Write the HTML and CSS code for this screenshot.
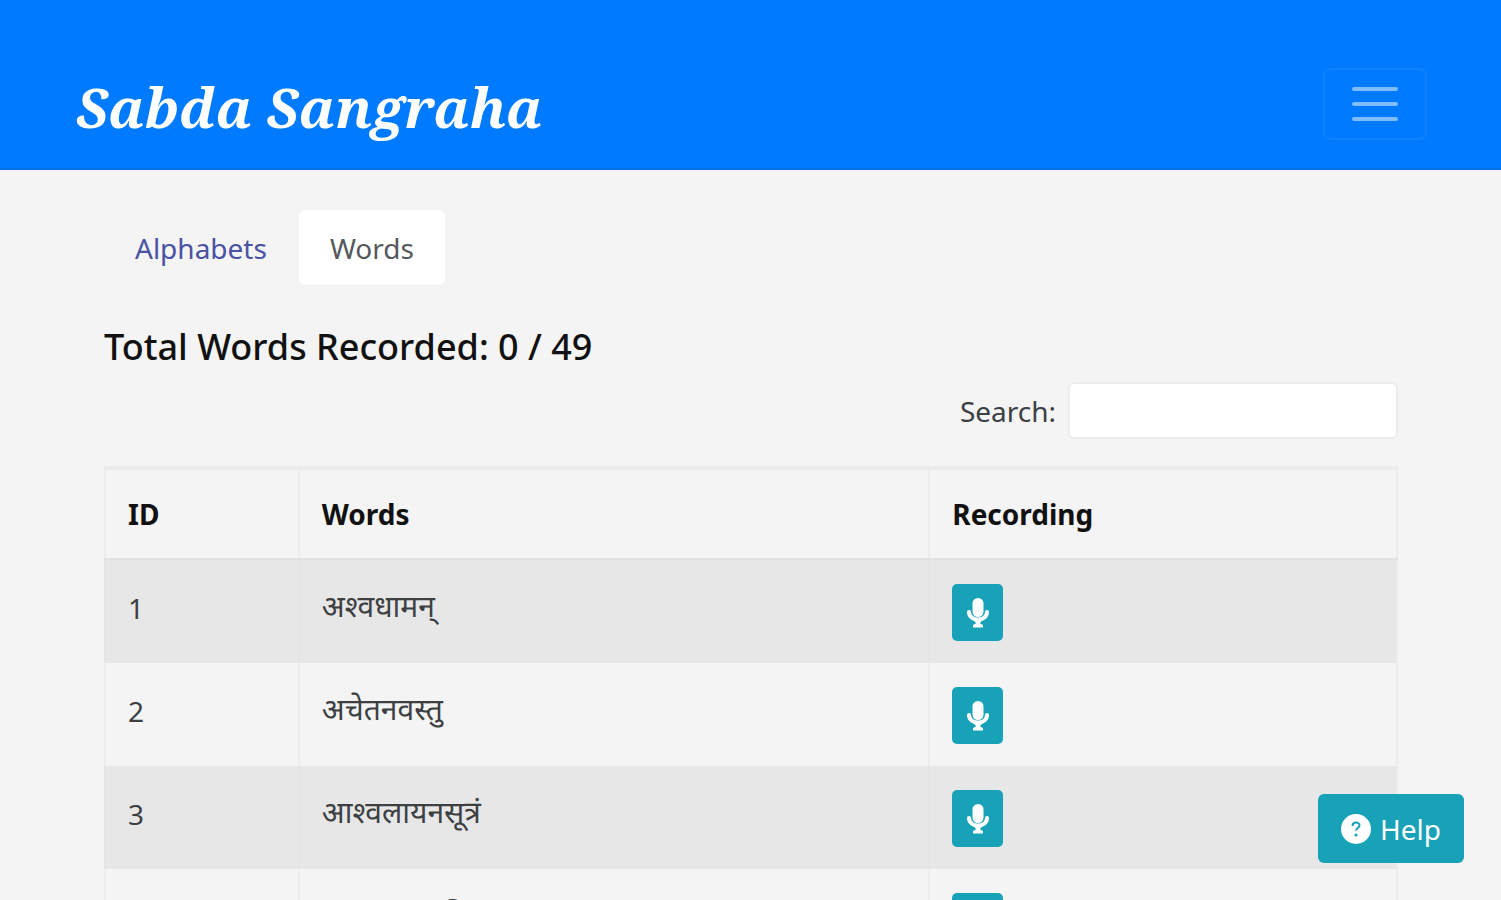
FILE: index.html
```html
<!DOCTYPE html>
<html lang="en">
<head>
    <meta charset="UTF-8">
    <meta name="viewport" content="width=device-width, initial-scale=1.0">
    <title>Sabda Sangraha</title>
    <link rel="stylesheet" href="styles.css">
</head>
<body>
<svg class="sprite" aria-hidden="true">
    <symbol id="mic" viewBox="0 0 22 30">
        <rect x="5.5" y="0" width="11" height="19" rx="5.5" />
        <path d="M2 14c0 4.500 4 7.500 9 7.500s9-3 9-7.500" fill="none" stroke="currentColor" stroke-width="4" stroke-linecap="round" />
        <path d="M7 22h8l-2 3.500 3 1.500v2.500H6V27l3-1.500z" />
    </symbol>
</svg>

<nav class="navbar">
    <a class="brand" href="#">Sabda Sangraha</a>
    <button class="toggler" type="button" aria-label="Toggle navigation">
        <svg class="toggler-icon" viewBox="0 0 60 60"><path d="M9 15h42M9 30h42M9 45h42" /></svg>
    </button>
</nav>

<main class="container">
    <div class="tabs">
        <a class="tab" href="#alphabets">Alphabets</a>
        <a class="tab active" href="#words">Words</a>
    </div>

    <h1 class="total">Total Words Recorded: 0 / 49</h1>

    <div class="search">
        <label for="searchInput">Search:</label>
        <input type="search" id="searchInput">
    </div>

    <table class="words-table">
        <thead>
            <tr>
                <th class="col-id">ID</th>
                <th class="col-word">Words</th>
                <th>Recording</th>
            </tr>
        </thead>
        <tbody>
            <tr>
                <td>1</td>
                <td class="word">अश्वधामन्</td>
                <td><button class="record" type="button" aria-label="Record"><svg><use href="#mic" /></svg></button></td>
            </tr>
            <tr>
                <td>2</td>
                <td class="word">अचेतनवस्तु</td>
                <td><button class="record" type="button" aria-label="Record"><svg><use href="#mic" /></svg></button></td>
            </tr>
            <tr>
                <td>3</td>
                <td class="word">आश्वलायनसूत्रं</td>
                <td><button class="record" type="button" aria-label="Record"><svg><use href="#mic" /></svg></button></td>
            </tr>
            <tr>
                <td>4</td>
                <td class="word">आश्वलायनविद्</td>
                <td><button class="record" type="button" aria-label="Record"><svg><use href="#mic" /></svg></button></td>
            </tr>
        </tbody>
    </table>
</main>

<button class="help" type="button">
    <svg class="help-icon" viewBox="0 0 30 30">
        <circle cx="15" cy="15" r="15" />
        <path d="M11.500 12c0-4.500 7-4.500 7-.500 0 2.500-3.500 2.500-3.500 5" />
        <circle class="dot" cx="15" cy="21" r="1.600" />
    </svg>
    Help
</button>
</body>
</html>
```

FILE: styles.css
```css
:root {
    --blue: #007bff;
    --teal: #17a2b8;
    --page: #f4f4f4;
    --line: #ebecec;
}

* {
    box-sizing: border-box;
}

body {
    margin: 0;
    background-color: var(--page);
    color: #3c4043;
    font-family: "Noto Sans", "Open Sans", sans-serif;
    font-size: 28px;
    line-height: 48px;
}

.sprite {
    position: absolute;
    width: 0;
    height: 0;
}

.navbar {
    display: flex;
    justify-content: space-between;
    align-items: flex-start;
    padding: 68px 74px 28px 76px;
    background-color: var(--blue);
    border-bottom: 2px solid #0070e8;
}

.brand {
    padding-top: 6px;
    color: white;
    font-family: "Noto Serif", "DejaVu Serif Condensed", "DejaVu Serif", serif;
    font-size: 55px;
    font-weight: bold;
    font-style: italic;
    line-height: 66px;
    text-decoration: none;
}

.toggler {
    display: flex;
    align-items: center;
    padding: 4px 20px;
    background: none;
    border: 2px solid #0e83ff;
    border-radius: 8px;
    cursor: pointer;
}

.toggler-icon {
    width: 60px;
    height: 60px;
    fill: none;
    stroke: #80bdff;
    stroke-width: 4;
    stroke-linecap: round;
}

.container {
    padding: 40px 103px 0 104px;
}

.tabs {
    display: flex;
    gap: 1px;
}

.tab {
    padding: 14px 31px 13px;
    border-radius: 6px;
    color: #4a52a3;
    text-decoration: none;
}

.tab.active {
    background-color: white;
    color: #55595c;
}

.total {
    margin: 38px 0 11px;
    color: #111;
    font-size: 36px;
    font-weight: 500;
    line-height: 48px;
}

.search {
    display: flex;
    justify-content: flex-end;
    align-items: center;
    gap: 12px;
    margin-bottom: 27px;
}

.search input {
    width: 330px;
    height: 57px;
    padding: 8px 16px;
    background-color: white;
    border: 2px solid var(--line);
    border-radius: 6px;
    font: inherit;
}

.words-table {
    width: 100%;
    table-layout: fixed;
    border-collapse: collapse;
    border: 2px solid var(--line);
    border-top-width: 4px;
}

.words-table th,
.words-table td {
    padding: 24px 22px 22px;
    border-left: 2px solid var(--line);
    text-align: left;
    vertical-align: top;
}

.words-table th {
    padding: 20px 22px;
    border-bottom: 2px solid #dfe1e2;
    color: #111;
    font-weight: bold;
}

.words-table tbody tr:nth-child(odd) {
    background-color: #e7e7e7;
}

.words-table tbody tr:nth-child(odd) td {
    border-color: #e4e5e5;
}

.words-table .word {
    font-size: 30px;
    line-height: 44px;
}

.col-id {
    width: 15%;
}

.col-word {
    width: 48.8%;
}

.record {
    display: flex;
    justify-content: center;
    align-items: center;
    width: 51px;
    height: 57px;
    padding: 0;
    background-color: var(--teal);
    border: none;
    border-radius: 5px;
    color: white;
    cursor: pointer;
}

.record svg {
    width: 22px;
    height: 30px;
    fill: currentColor;
}

.help {
    position: fixed;
    right: 37px;
    bottom: 37px;
    display: flex;
    align-items: center;
    gap: 9px;
    padding: 11px 23px 10px;
    background-color: var(--teal);
    border: none;
    border-radius: 6px;
    color: white;
    font: inherit;
    cursor: pointer;
}

.help-icon {
    width: 30px;
    height: 30px;
    fill: white;
}

.help-icon path {
    fill: none;
    stroke: var(--teal);
    stroke-width: 2;
}

.help-icon .dot {
    fill: var(--teal);
}
```
